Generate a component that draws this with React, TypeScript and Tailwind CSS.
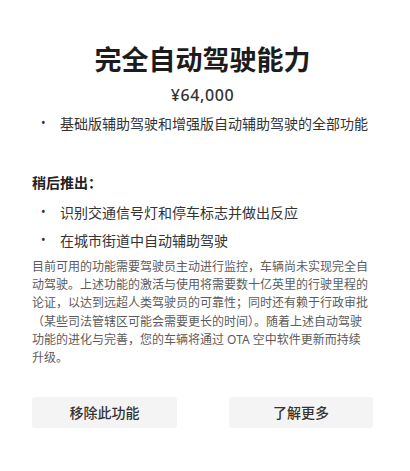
import React from "react";

const font = { fontFamily: '"Noto Sans", "Noto Sans CJK SC", sans-serif' };

function Bullet({ children }: { children: React.ReactNode }) {
  return (
    <div className="flex items-center h-[24px] text-[14px] text-[#333]">
      <span className="w-[28px] pl-[9px] text-[12px] leading-none">•</span>
      <span>{children}</span>
    </div>
  );
}

export default function App() {
  return (
    <div className="w-[410px] h-[471px] bg-white" style={font}>
      <div className="pl-8 pr-[37px] pt-[42px]">
        <h1 className="text-center text-[27px] leading-[36px] font-bold text-[#1c1c1c]">
          完全自动驾驶能力
        </h1>
        <div className="mt-[7px] text-center text-[16px] leading-[20px] font-medium tracking-[0.6px] text-[#333]">
          ¥64,000
        </div>
        <div className="mt-[6px]">
          <Bullet>基础版辅助驾驶和增强版自动辅助驾驶的全部功能</Bullet>
        </div>
        <div className="mt-[37px] text-[14px] leading-[22px] font-bold text-[#222]">
          稍后推出：
        </div>
        <div className="mt-[6px] flex flex-col gap-[4px]">
          <Bullet>识别交通信号灯和停车标志并做出反应</Bullet>
          <Bullet>在城市街道中自动辅助驾驶</Bullet>
        </div>
        <p className="mt-[6px] text-[12px] leading-[18.2px] text-[#5c5c5c]">
          目前可用的功能需要驾驶员主动进行监控，车辆尚未实现完全自动驾驶。上述功能的激活与使用将需要数十亿英里的行驶里程的论证，以达到远超人类驾驶员的可靠性；同时还有赖于行政审批（某些司法管辖区可能会需要更长的时间）。随着上述自动驾驶功能的进化与完善，您的车辆将通过 OTA 空中软件更新而持续
          <br />
          升级。
        </p>
        <div className="mt-[30px] flex justify-between">
          <button className="w-[145px] h-[31px] rounded-[3px] bg-[#f4f4f4] text-[14px] font-medium text-[#333]">
            移除此功能
          </button>
          <button className="w-[144px] h-[31px] rounded-[3px] bg-[#f4f4f4] text-[14px] font-medium text-[#333]">
            了解更多
          </button>
        </div>
      </div>
    </div>
  );
}
